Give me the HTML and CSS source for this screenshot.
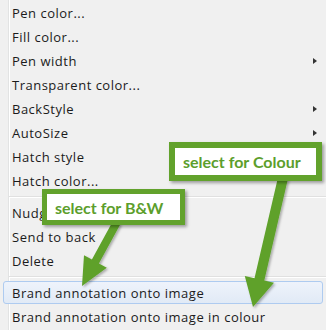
FILE: index.html
```html
<!DOCTYPE html>
<html lang="en">
<head>
    <meta charset="UTF-8">
    <title>Context menu</title>
    <link rel="stylesheet" href="styles.css">
</head>
<body>
    <div class="menu">
        <div class="item">Pen color...</div>
        <div class="item">Fill color...</div>
        <div class="item">Pen width<span class="sub-arrow"></span></div>
        <div class="item">Transparent color...</div>
        <div class="item">BackStyle<span class="sub-arrow"></span></div>
        <div class="item">AutoSize<span class="sub-arrow"></span></div>
        <div class="item">Hatch style</div>
        <div class="item">Hatch color...</div>
        <div class="sep"></div>
        <div class="item">Nudge</div>
        <div class="item">Send to back</div>
        <div class="item">Delete</div>
        <div class="sep"></div>
        <div class="item hover">Brand annotation onto image</div>
        <div class="item">Brand annotation onto image in colour</div>
    </div>

    <svg class="arrows" width="326" height="330" viewBox="0 0 326 330">
        <defs>
            <filter id="shade" x="-20%" y="-20%" width="140%" height="140%">
                <feDropShadow dx="1.5" dy="1.5" stdDeviation="1.2" flood-color="#000" flood-opacity="0.3"/>
            </filter>
        </defs>
        <polygon filter="url(#shade)" fill="#5ea12a"
            points="113.5,220 120.5,224 98.9,263.4 106.8,267.7 82,286 84,255.3 91.9,259.6"/>
        <polygon filter="url(#shade)" fill="#5ea12a"
            points="278.1,176.9 287.9,179.1 264.3,280.4 274,282.7 253,307 244.8,275.9 254.5,278.2"/>
    </svg>

    <div class="callout bw">select for B&amp;W</div>
    <div class="callout colour">select for Colour</div>
</body>
</html>
```

FILE: styles.css
```css
body {
    margin: 0;
    width: 326px;
    height: 330px;
    overflow: hidden;
    background-color: #f0f0f0;
    font-family: "Segoe UI", "Open Sans", "Noto Sans", sans-serif;
    position: relative;
}
.menu {
    padding-top: 1px;
    height: 329px;
    background: linear-gradient(to right, #f0f0f0 8px, #e2e3e3 8px, #e2e3e3 9px, #fff 9px, #fff 10px, #f0f0f0 10px);
}
.item {
    display: flex;
    justify-content: space-between;
    align-items: center;
    height: 24px;
    padding: 0 9px 0 12px;
    font-size: 13px;
    letter-spacing: 0.5px;
    color: #1b1b1b;
    box-sizing: border-box;
}
.sub-arrow {
    width: 0;
    height: 0;
    border-top: 3.5px solid transparent;
    border-bottom: 3.5px solid transparent;
    border-left: 4px solid #333;
}
.sep {
    height: 8px;
    margin-left: 9px;
    box-sizing: border-box;
    padding-top: 3px;
}
.sep::before {
    content: "";
    display: block;
    height: 1px;
    background-color: #e0e0e0;
    border-bottom: 1px solid #fff;
}
.item.hover {
    margin: 0 3px;
    padding-left: 8px;
    height: 23px;
    margin-bottom: 1px;
    border: 1px solid #aecbf0;
    border-radius: 3px;
    background: linear-gradient(to bottom, #eef3fb, #e1eaf6);
}
.arrows {
    position: absolute;
    left: 0;
    top: 0;
}
.callout {
    position: absolute;
    box-sizing: border-box;
    border: 5px solid #62a22c;
    background-color: #fff;
    color: #5c9e2c;
    font-family: Lato, "Open Sans", sans-serif;
    font-weight: bold;
    font-size: 16px;
    display: flex;
    align-items: center;
    padding-left: 8px;
    box-shadow: 2px 2px 3px rgba(0, 0, 0, 0.35);
}
.bw {
    left: 42px;
    top: 189px;
    width: 143px;
    height: 36px;
}
.colour {
    left: 169px;
    top: 142px;
    width: 153px;
    height: 39px;
    border-width: 6px;
}
```
